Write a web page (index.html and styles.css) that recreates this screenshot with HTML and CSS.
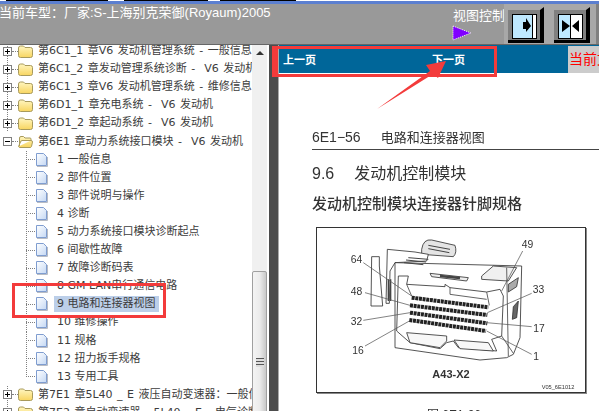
FILE: index.html
```html
<!doctype html>
<html lang="zh-CN">
    <head>
        <meta charset="utf-8" />
        <title>当前车型</title>
        <link rel="stylesheet" href="styles.css">
    </head>
    <body>
        <svg class="icon-defs" width="0" height="0">
            <defs>
                <linearGradient id="folderFill" x1="0" y1="0" x2="0" y2="1">
                    <stop offset="0" stop-color="#fff6c0"/>
                    <stop offset="1" stop-color="#f8d560"/>
                </linearGradient>
                <linearGradient id="docFill" x1="0" y1="0" x2="1" y2="1">
                    <stop offset="0" stop-color="#ffffff"/>
                    <stop offset="1" stop-color="#c4d8f4"/>
                </linearGradient>
                <symbol id="folder" viewBox="0 0 15 13">
                    <path d="M.5 3Q.5 1 2.500 1H5.500L7 2.500H12.500Q14.500 2.500 14.500 4.500V10.500Q14.500 12.500 12.500 12.500H2.500Q.5 12.500 .5 10.500Z" fill="url(#folderFill)" stroke="#a89a5c"/>
                </symbol>
                <symbol id="folder-open" viewBox="0 0 15 13">
                    <path d="M1.500 11V3Q1.500 1.500 3 1.500H5.500L7 3H12Q13 3 13 4V5.500H4Q3 5.500 2.500 7L.5 11.500Q1 12.500 2 12.500H12Q13 12.500 13.500 11.500L14.500 7Q14.500 5.500 13 5.500" fill="url(#folderFill)" stroke="#a89a5c"/>
                </symbol>
                <symbol id="doc" viewBox="0 0 12 14">
                    <path d="M1 13.500H11.500V4" fill="none" stroke="#b8bcc4"/>
                    <path d="M.5 .5H7.500L10.500 3.500V12.500H.5Z" fill="url(#docFill)" stroke="#7f9dd0"/>
                </symbol>
            </defs>
        </svg>

        <div class="top-strip"></div>
        <div class="toolbar">
            <div class="toolbar__title">当前车型：厂家:S-上海别克荣御(Royaum)2005</div>
            <div class="toolbar__view">
                <div class="toolbar__label">视图控制</div>
                <svg class="toolbar__arrow" width="20" height="16" viewBox="0 0 20 16"><path d="M1 1 L19 8 L1 15 Z" fill="#8000ff" stroke="#fff" stroke-dasharray="1 1"/></svg>
            </div>
            <div class="view-btn">
                <svg width="36" height="37" viewBox="0 0 36 37">
                    <rect y="3" width="32" height="30" fill="#808080"/>
                    <path d="M32 3 L36 0 V36 H0 V33 H32 Z" fill="#000"/>
                    <rect x="4.500" y="7.500" width="24" height="24" fill="#bfe9ff" stroke="#000"/>
                    <rect x="24.500" y="7.500" width="4" height="24" fill="#fff" stroke="#000"/>
                    <path d="M15 15 H18 V11 L23 19 L18 25 V22 H15 Z" fill="#000"/>
                </svg>
            </div>
            <div class="view-btn">
                <svg width="36" height="37" viewBox="0 0 36 37">
                    <rect y="3" width="32" height="30" fill="#808080"/>
                    <path d="M32 3 L36 0 V36 H0 V33 H32 Z" fill="#000"/>
                    <rect x="4.500" y="7.500" width="24" height="24" fill="#fff" stroke="#000"/>
                    <rect x="5" y="8" width="12" height="23" fill="#bfe9ff"/>
                    <path d="M16.500 7 V31" stroke="#000"/>
                    <path d="M8 13 L16 19 L8 25 Z M25 13 L18 19 L25 25 Z" fill="#000"/>
                </svg>
            </div>
            <div class="view-btn view-btn--cut"></div>
        </div>

        <div class="main">
            <div class="tree">
                <ul class="tree__list">
                    <li class="tree__row tree__row--line"><span class="tree__box tree__box--plus"></span><span class="tree__dots"></span><svg class="folder" width="15" height="13"><use href="#folder"/></svg><span class="tree__text">第6C1_1 章V6 发动机管理系统 - 一般信息</span></li>
                    <li class="tree__row tree__row--line"><span class="tree__box tree__box--plus"></span><span class="tree__dots"></span><svg class="folder" width="15" height="13"><use href="#folder"/></svg><span class="tree__text">第6C1_2 章发动管理系统诊断 -  V6 发动机</span></li>
                    <li class="tree__row tree__row--line"><span class="tree__box tree__box--plus"></span><span class="tree__dots"></span><svg class="folder" width="15" height="13"><use href="#folder"/></svg><span class="tree__text">第6C1_3 章V6 发动机管理系统 - 维修信息</span></li>
                    <li class="tree__row tree__row--line"><span class="tree__box tree__box--plus"></span><span class="tree__dots"></span><svg class="folder" width="15" height="13"><use href="#folder"/></svg><span class="tree__text">第6D1_1 章充电系统 -  V6 发动机</span></li>
                    <li class="tree__row tree__row--line"><span class="tree__box tree__box--plus"></span><span class="tree__dots"></span><svg class="folder" width="15" height="13"><use href="#folder"/></svg><span class="tree__text">第6D1_2 章起动系统 -  V6 发动机</span></li>
                    <li class="tree__row"><span class="tree__box"></span><span class="tree__dots"></span><svg class="folder" width="15" height="13"><use href="#folder-open"/></svg><span class="tree__text">第6E1 章动力系统接口模块 -  V6 发动机</span></li>
                    <li class="tree__row tree__row--leaf"><span class="tree__branch"></span><svg class="doc" width="12" height="14"><use href="#doc"/></svg><span class="tree__text">1 一般信息</span></li>
                    <li class="tree__row tree__row--leaf"><span class="tree__branch"></span><svg class="doc" width="12" height="14"><use href="#doc"/></svg><span class="tree__text">2 部件位置</span></li>
                    <li class="tree__row tree__row--leaf"><span class="tree__branch"></span><svg class="doc" width="12" height="14"><use href="#doc"/></svg><span class="tree__text">3 部件说明与操作</span></li>
                    <li class="tree__row tree__row--leaf"><span class="tree__branch"></span><svg class="doc" width="12" height="14"><use href="#doc"/></svg><span class="tree__text">4 诊断</span></li>
                    <li class="tree__row tree__row--leaf"><span class="tree__branch"></span><svg class="doc" width="12" height="14"><use href="#doc"/></svg><span class="tree__text">5 动力系统接口模块诊断起点</span></li>
                    <li class="tree__row tree__row--leaf"><span class="tree__branch"></span><svg class="doc" width="12" height="14"><use href="#doc"/></svg><span class="tree__text">6 间歇性故障</span></li>
                    <li class="tree__row tree__row--leaf"><span class="tree__branch"></span><svg class="doc" width="12" height="14"><use href="#doc"/></svg><span class="tree__text">7 故障诊断码表</span></li>
                    <li class="tree__row tree__row--leaf"><span class="tree__branch"></span><svg class="doc" width="12" height="14"><use href="#doc"/></svg><span class="tree__text">8 GM LAN串行通信电路</span></li>
                    <li class="tree__row tree__row--leaf"><span class="tree__branch"></span><svg class="doc" width="12" height="14"><use href="#doc"/></svg><span class="tree__text tree__text--active">9 电路和连接器视图</span></li>
                    <li class="tree__row tree__row--leaf"><span class="tree__branch"></span><svg class="doc" width="12" height="14"><use href="#doc"/></svg><span class="tree__text">10 维修操作</span></li>
                    <li class="tree__row tree__row--leaf"><span class="tree__branch"></span><svg class="doc" width="12" height="14"><use href="#doc"/></svg><span class="tree__text">11 规格</span></li>
                    <li class="tree__row tree__row--leaf"><span class="tree__branch"></span><svg class="doc" width="12" height="14"><use href="#doc"/></svg><span class="tree__text">12 扭力扳手规格</span></li>
                    <li class="tree__row tree__row--leaf"><span class="tree__branch tree__branch--last"></span><svg class="doc" width="12" height="14"><use href="#doc"/></svg><span class="tree__text">13 专用工具</span></li>
                    <li class="tree__row tree__row--line"><span class="tree__box tree__box--plus"></span><span class="tree__dots"></span><svg class="folder" width="15" height="13"><use href="#folder"/></svg><span class="tree__text">第7E1 章5L40 _ E 液压自动变速器：一般信息</span></li>
                    <li class="tree__row tree__row--line"><span class="tree__box tree__box--plus"></span><span class="tree__dots"></span><svg class="folder" width="15" height="13"><use href="#folder"/></svg><span class="tree__text">第7E2 章自动变速器 - 5L40 _ E - 电气诊断</span></li>
                </ul>
                <div class="tree__scrollbar">
                    <div class="tree__scroll-up"></div>
                    <div class="tree__thumb"><span class="tree__grip"></span></div>
                </div>
            </div>
            <div class="splitter"></div>
            <div class="viewer">
                <div class="viewer__bar">
                    <span class="viewer__link viewer__link--prev">上一页</span>
                    <span class="viewer__link viewer__link--next">下一页</span>
                    <span class="viewer__current">当前文档</span>
                </div>
                <div class="page">
                    <div class="page__head">6E1−56<span class="page__head-title">电路和连接器视图</span></div>
                    <div class="page__section">9.6<span class="page__section-title">发动机控制模块</span></div>
                    <div class="page__sub">发动机控制模块连接器针脚规格</div>
                    <div class="figure">
                        <svg class="figure__svg" width="268" height="164" viewBox="51 36 804 492">
                            <!-- connector body -->
                            <g fill="#fff" stroke="#333" stroke-width="2.500">
                                <path d="M215 122 H238 V150 L248 270 L213 270 Z"/>
                                <path d="M365 100 Q370 68 395 72 L465 88 Q472 110 460 122 L365 115 Z" fill="#e4e4e4"/>
                                <path d="M262 100 L345 108 L385 115 L380 135 L285 140 L270 165 L268 262 L258 262 Z"/>
                                <path d="M285 140 L665 150 L660 365 L640 415 L620 425 L540 432 L285 395 Z"/>
                                <path d="M545 180 L580 150 L650 155 L625 195 L545 190 Z" fill="#f0f0f0"/>
                                <path d="M295 180 H325 L320 205 L435 212 V205 L450 215 L560 228 L600 220 L610 240 L605 360 L575 370 L590 405 L475 395 L460 375 L440 380 L420 398 L330 380 L290 345 Z"/>
                                <path d="M320 350 L440 360 V375 L420 395 L330 380 Z" fill="#f8f8f8"/>
                                <path d="M462 372 L565 380 L580 405 L480 398 Z" fill="#f8f8f8"/>
                                <path d="M390 172 L505 185 L500 195 L395 182 Z" fill="#eee"/>
                                <path d="M640 272 L655 255 L650 305 L637 310 Z" fill="#666"/>
                                <path d="M625 205 L655 185 L650 212 L625 228 Z" fill="#aaa"/>
                            </g>
                            <g stroke="#444" stroke-width="3" fill="none">
                                <path d="M325 125 L385 130 M318 132 L378 138 M312 140 L370 146"/>
                                <path d="M385 88 L450 100 M385 98 L448 110"/>
                                <path d="M265 190 V255 M272 190 V255" stroke-width="4"/>
                                <path d="M420 180 L480 186" stroke-width="7"/>
                                <path d="M620 155 L625 420 M605 360 L640 412 M450 215 V235 L560 250" stroke-width="2.500"/>
                                <path d="M320 205 L335 240 M560 228 L568 268" stroke-width="2.500"/>
                            </g>
                            <!-- pin rows -->
                            <g stroke="#222" stroke-width="12" stroke-dasharray="9 2" fill="none">
                                <path d="M335 245 L565 274"/>
                                <path d="M330 268 L562 297"/>
                                <path d="M330 290 L562 322"/>
                                <path d="M328 312 L558 345"/>
                            </g>
                            <g fill="none" stroke="#555" stroke-width="2.200">
                                <path d="M190 140 L335 240 M195 230 L330 268 M190 313 L330 290 M195 390 L328 315"/>
                                <path d="M668 105 L605 225 M695 232 L562 290 M695 332 L560 320 M695 415 L560 345"/>
                            </g>
                            <g class="figure__labels">
                                <text x="152" y="140">64</text>
                                <text x="152" y="237">48</text>
                                <text x="152" y="327">32</text>
                                <text x="157" y="415">16</text>
                                <text x="665" y="97">49</text>
                                <text x="698" y="232">33</text>
                                <text x="700" y="347">17</text>
                                <text x="700" y="432">1</text>
                                <text class="figure__name" x="397" y="487">A43-X2</text>
                                <text class="figure__code" x="725" y="518">V05_6E1012</text>
                            </g>
                        </svg>
                    </div>
                    <div class="page__caption">图 6E1-26</div>
                </div>
            </div>
        </div>

        <div class="mark mark--bar"></div>
        <div class="mark mark--row"></div>
        <svg class="mark mark--arrow" width="70" height="60" viewBox="0 0 70 60"><path d="M0 54 L53 16 L49 10 L69 6 L61 23 L56 19 Z" fill="#f33b3b"/></svg>
    </body>
</html>
```
FILE: styles.css
```css
* {
    box-sizing: border-box;
}

html,
body {
    margin: 0;
    height: 100%;
    overflow: hidden;
}

body {
    position: relative;
    font-family: "Liberation Sans", "Noto Sans CJK SC", sans-serif;
    background: #fff;
}

.icon-defs {
    position: absolute;
}

.top-strip {
    height: 4px;
    background:
        linear-gradient(to right, #fff 6px, #000 6px, #000 108px, #fff 108px, #fff 124px, #000 124px, #000 208px, #fff 208px, #fff 220px, #000 220px, #000 296px, #fff 296px) top / 100% 1px no-repeat,
        #5b7fd0;
}

.toolbar {
    display: flex;
    height: 41px;
    overflow: hidden;
    background: #999;
    border-bottom: 1px solid #666;
}

.toolbar__title {
    flex: none;
    width: 454px;
    margin-left: -1px;
    color: #fff;
    font-size: 13px;
    line-height: 18px;
    white-space: nowrap;
}

.toolbar__view {
    flex: none;
    width: 51px;
    color: #fff;
    font-size: 13px;
    line-height: 18px;
    white-space: nowrap;
}

.toolbar__label {
    padding-top: 3px;
}

.toolbar__arrow {
    display: block;
    margin-left: -1px;
}

.view-btn {
    flex: none;
    width: 46px;
    padding: 3px 4px 0;
    background: #a8a8a8;
}

.view-btn svg {
    display: block;
}

.view-btn--cut {
    width: 3px;
    padding: 0;
    background: #808080;
}

.main {
    display: flex;
    height: 366px;
    overflow: hidden;
}

.tree {
    display: flex;
    flex: none;
    width: 269px;
    overflow: hidden;
    background: #fff;
}

.tree__list {
    flex: 1;
    min-width: 0;
    margin: -3px 0 0;
    padding: 0;
    list-style: none;
    overflow: hidden;
}

.tree__row {
    display: flex;
    align-items: center;
    height: 18.1px;
    padding-left: 3px;
    white-space: nowrap;
    font-family: "DejaVu Sans", "Noto Sans CJK SC", sans-serif;
    font-size: 11px;
    word-spacing: 1px;
    color: #3c3c3c;
}

.tree__row--line {
    background: repeating-linear-gradient(to bottom, #808080 0 1px, transparent 1px 2px) 7px 0 / 1px 100% no-repeat;
}

.tree__row--leaf {
    padding-left: 26px;
    word-spacing: 0;
}

.tree__box {
    flex: none;
    width: 9px;
    height: 9px;
    border: 1px solid #808080;
    background: linear-gradient(#000, #000) center / 5px 1px no-repeat, #fff;
}

.tree__box--plus {
    background:
        linear-gradient(#000, #000) center / 5px 1px no-repeat,
        linear-gradient(#000, #000) center / 1px 5px no-repeat,
        #fff;
}

.tree__dots {
    flex: none;
    width: 6px;
    border-top: 1px dotted #808080;
}

/* vertical and horizontal dotted connector of a leaf */
.tree__branch {
    flex: none;
    align-self: stretch;
    width: 10px;
    background:
        repeating-linear-gradient(to bottom, #808080 0 1px, transparent 1px 2px) 0 0 / 1px 100% no-repeat,
        repeating-linear-gradient(to right, #808080 0 1px, transparent 1px 2px) 0 50% / 100% 1px no-repeat;
}

.tree__branch--last {
    background-size: 1px 50%, 100% 1px;
}

.folder,
.doc {
    flex: none;
}

.tree__text {
    margin-left: 3px;
    padding: 0 2px;
    white-space: pre;
    line-height: 16px;
}

.tree__row--leaf .tree__text {
    margin-left: 6px;
    padding: 0 3px;
}

.tree__text--active {
    background: #bccfe9;
}

.tree__scrollbar {
    flex: none;
    width: 15px;
    margin-right: 2px;
    background: #f0f0f0;
}

.tree__scroll-up {
    width: 0;
    height: 0;
    margin: 6px auto 7px;
    border-left: 4px solid transparent;
    border-right: 4px solid transparent;
    border-bottom: 4px solid #333;
}

.tree__thumb {
    display: flex;
    align-items: center;
    justify-content: center;
    height: 183px;
    margin-top: 216px;
    background: linear-gradient(to right, #f4f4f4, #ececec 50%, #c8c8c8);
    border: 1px solid #a0a0a0;
    border-radius: 2px 2px 0 0;
}

.tree__grip {
    width: 8px;
    height: 9px;
    background: repeating-linear-gradient(to bottom, #555 0 1px, #ddd 1px 3px);
}

.splitter {
    flex: none;
    width: 10px;
    background: #4c4c4c;
    border-right: 1px solid #aaa;
}

.viewer {
    flex: 1;
    min-width: 0;
    overflow: hidden;
}

.viewer__bar {
    display: flex;
    align-items: center;
    height: 28px;
    background: #069;
    color: #fff;
    font-size: 11px;
    font-weight: bold;
    white-space: nowrap;
}

.viewer__link--prev {
    margin-left: 4px;
}

.viewer__link--next {
    margin-left: 116px;
}

.viewer__current {
    align-self: stretch;
    margin: 1px 0 0 103px;
    padding-left: 1px;
    background: #ccc;
    color: #f00;
    font-size: 14px;
    font-weight: normal;
    line-height: 27px;
}

.page {
    padding: 56px 0 0 33px;
    color: #333;
    filter: blur(0.35px);
}

.page__head {
    padding-bottom: 3px;
    font-size: 14px;
    line-height: 16px;
    border-bottom: 1px solid #444;
}

.page__head-title {
    margin-left: 20px;
    font-size: 13px;
}

.page__section {
    margin-top: 14px;
    font-size: 16px;
    line-height: 20px;
}

.page__section-title {
    margin-left: 20px;
}

.page__sub {
    margin-top: 11px;
    font-size: 15px;
    font-weight: 500;
    line-height: 18px;
    white-space: nowrap;
}

.figure {
    width: 270px;
    height: 166px;
    margin: 14px 0 0 4px;
    border: 1px solid #333;
    box-shadow: 1px 1px 0 #888;
}

.figure__svg {
    display: block;
}

.figure__labels {
    font-size: 31px;
    fill: #333;
}

.figure__name {
    font-size: 33px;
    font-weight: bold;
}

.figure__code {
    font-size: 17px;
}

.page__caption {
    margin-top: 12px;
    padding-left: 115px;
    font-size: 12px;
}

.mark {
    position: absolute;
}

.mark--bar {
    left: 272px;
    top: 46px;
    width: 225px;
    height: 31px;
    border: 3px solid #f33b3b;
    border-left-width: 6px;
}

.mark--row {
    left: 12px;
    top: 283px;
    width: 154px;
    height: 35px;
    border: 3px solid #f33b3b;
}

.mark--arrow {
    left: 377px;
    top: 55px;
}
```
